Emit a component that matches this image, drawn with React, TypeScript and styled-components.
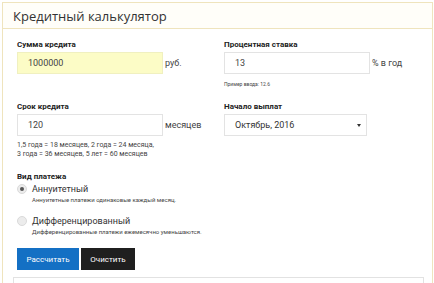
import styled, { createGlobalStyle } from "styled-components";

const GlobalStyle = createGlobalStyle`
  html, body {
    margin: 0;
    padding: 0;
    background: #ffffff;
  }
  body {
    font-family: Roboto, "Liberation Sans", sans-serif;
    color: #222;
    overflow: hidden;
  }
`;

const App = () => (
  <>
    <GlobalStyle />
    <Panel>
      <Header>
        <Title>Кредитный калькулятор</Title>
      </Header>
      <Body>
        <Form>
          <Grid>
            <Field>
              <Label>Сумма кредита</Label>
              <InputRow>
                <Input $highlight>1000000</Input>
                <Unit>руб.</Unit>
              </InputRow>
            </Field>
            <Field>
              <Label>Процентная ставка</Label>
              <InputRow>
                <Input>13</Input>
                <Unit>% в год</Unit>
              </InputRow>
              <Hint $size={5}>Пример ввода: 12.6</Hint>
            </Field>
            <Field>
              <Label>Срок кредита</Label>
              <InputRow>
                <Input>120</Input>
                <Unit>месяцев</Unit>
              </InputRow>
              <Hint $gap={5}>
                1,5 года = 18 месяцев, 2 года = 24 месяца,
                <br />3 года = 36 месяцев, 5 лет = 60 месяцев
              </Hint>
            </Field>
            <Field>
              <Label>Начало выплат</Label>
              <InputRow>
                <Select>
                  Октябрь, 2016
                  <Caret />
                </Select>
              </InputRow>
            </Field>
          </Grid>

          <GroupLabel>Вид платежа</GroupLabel>
          <RadioOption>
            <RadioRow>
              <Radio $checked />
              <RadioText>Аннуитетный</RadioText>
            </RadioRow>
            <RadioNote>Аннуитетные платежи одинаковые каждый месяц.</RadioNote>
          </RadioOption>
          <RadioOption $gap={11}>
            <RadioRow>
              <Radio />
              <RadioText>Дифференцированный</RadioText>
            </RadioRow>
            <RadioNote>Дифференцированные платежи ежемесячно уменьшаются.</RadioNote>
          </RadioOption>

          <Buttons>
            <Button $primary>Рассчитать</Button>
            <Button>Очистить</Button>
          </Buttons>
        </Form>
        <ResultBox />
      </Body>
    </Panel>
  </>
);

export default App;

const Panel = styled.div`
  margin: 2px 0 0 2px;
  width: 429px;
  height: 300px;
  border: 1px solid #efe4bd;
  background: #fff;
`;

const Header = styled.div`
  height: 25px;
  display: flex;
  align-items: center;
  padding-left: 10px;
  border-bottom: 1px solid #efe4bd;
  background: #fffef9;
`;

const Title = styled.span`
  font-family: "Open Sans", "Liberation Sans", sans-serif;
  font-size: 13px;
  color: #333;
`;

const Body = styled.div`
  padding: 10px 8px 0 10px;
`;

const Form = styled.div`
  padding-left: 4px;
  display: flex;
  flex-direction: column;
`;

const Grid = styled.div`
  display: grid;
  grid-template-columns: 207px 1fr;
  row-gap: 12px;
  align-items: start;
`;

const Field = styled.div`
  display: flex;
  flex-direction: column;
`;

const Label = styled.div`
  font-size: 8px;
  font-weight: 700;
  line-height: 12px;
  margin-bottom: 1px;
  color: #222;
`;

const InputRow = styled.div`
  display: flex;
  align-items: center;
  gap: 2px;
`;

const Input = styled.div<{ $highlight?: boolean }>`
  box-sizing: border-box;
  width: 146px;
  height: 22px;
  padding-left: 10px;
  display: flex;
  align-items: center;
  font-size: 9px;
  color: #444;
  background: ${({ $highlight }) => ($highlight ? "#fcfcc6" : "#fff")};
  border: 1px solid ${({ $highlight }) => ($highlight ? "#f0f0c0" : "#e3e3e3")};
`;

const Unit = styled.span`
  font-size: 9px;
  color: #444;
`;

const Hint = styled.div<{ $gap?: number; $size?: number }>`
  margin-top: ${({ $gap }) => $gap ?? 6}px;
  font-size: ${({ $size }) => $size ?? 7}px;
  line-height: 9px;
  color: #444;
`;

const Select = styled.div`
  box-sizing: border-box;
  width: 143px;
  height: 22px;
  padding: 0 5px 0 10px;
  display: flex;
  align-items: center;
  justify-content: space-between;
  font-size: 9px;
  color: #333;
  border: 1px solid #e3e3e3;
`;

const Caret = styled.span`
  width: 0;
  height: 0;
  border-left: 2px solid transparent;
  border-right: 2px solid transparent;
  border-top: 3px solid #333;
`;

const GroupLabel = styled.div`
  margin-top: 12px;
  font-size: 8px;
  font-weight: 700;
  line-height: 12px;
  color: #222;
`;

const RadioOption = styled.div<{ $gap?: number }>`
  margin-top: ${({ $gap }) => $gap ?? 0}px;
  display: flex;
  flex-direction: column;
`;

const RadioRow = styled.div`
  display: flex;
  align-items: center;
  gap: 5px;
  height: 12px;
`;

const Radio = styled.span<{ $checked?: boolean }>`
  box-sizing: border-box;
  width: 10px;
  height: 10px;
  border-radius: 50%;
  background: #ececec;
  border: 1px solid #dadada;
  display: flex;
  align-items: center;
  justify-content: center;
  &::after {
    content: "";
    display: ${({ $checked }) => ($checked ? "block" : "none")};
    width: 4px;
    height: 4px;
    border-radius: 50%;
    background: #555;
  }
`;

const RadioText = styled.span`
  font-size: 9px;
  color: #333;
`;

const RadioNote = styled.div`
  padding-left: 15px;
  font-size: 6px;
  line-height: 9px;
  color: #444;
`;

const Buttons = styled.div`
  margin-top: 12px;
  display: flex;
  gap: 2px;
`;

const Button = styled.div<{ $primary?: boolean }>`
  height: 22px;
  width: ${({ $primary }) => ($primary ? 62 : 54)}px;
  display: flex;
  align-items: center;
  justify-content: center;
  font-size: 8px;
  color: #fff;
  background: ${({ $primary }) => ($primary ? "#1470c4" : "#1f1f1f")};
`;

const ResultBox = styled.div`
  margin-top: 7px;
  height: 40px;
  border: 1px solid #e2e2e2;
  border-bottom: none;
`;
